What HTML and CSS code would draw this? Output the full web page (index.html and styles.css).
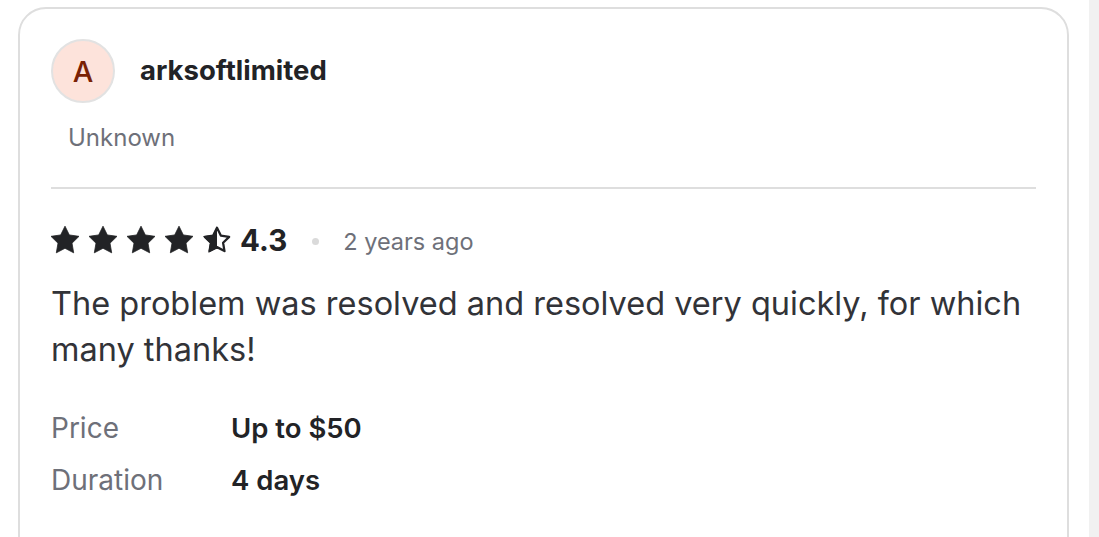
FILE: index.html
```html
<!DOCTYPE html>
<html>
<head>
<meta charset="utf-8">
<link rel="stylesheet" href="styles.css">
</head>
<body>
<div class="page">
  <main class="main">
    <article class="card">
      <header class="author">
        <div class="avatar">A</div>
        <div class="name">arksoftlimited</div>
      </header>
      <div class="country">Unknown</div>
      <hr class="divider">
      <div class="rating">
        <div class="stars">
          <svg class="star" viewBox="1.54 1.5 20.92 19.9"><path d="M12 1.5L15.23 8.05 22.46 9.1 17.23 14.2 18.47 21.4 12 18 5.53 21.4 6.77 14.2 1.54 9.1 8.77 8.05Z" fill="#222326" stroke="#222326" stroke-width="0.6" stroke-linejoin="round"/></svg>
          <svg class="star" viewBox="1.54 1.5 20.92 19.9"><path d="M12 1.5L15.23 8.05 22.46 9.1 17.23 14.2 18.47 21.4 12 18 5.53 21.4 6.77 14.2 1.54 9.1 8.77 8.05Z" fill="#222326" stroke="#222326" stroke-width="0.6" stroke-linejoin="round"/></svg>
          <svg class="star" viewBox="1.54 1.5 20.92 19.9"><path d="M12 1.5L15.23 8.05 22.46 9.1 17.23 14.2 18.47 21.4 12 18 5.53 21.4 6.77 14.2 1.54 9.1 8.77 8.05Z" fill="#222326" stroke="#222326" stroke-width="0.6" stroke-linejoin="round"/></svg>
          <svg class="star" viewBox="1.54 1.5 20.92 19.9"><path d="M12 1.5L15.23 8.05 22.46 9.1 17.23 14.2 18.47 21.4 12 18 5.53 21.4 6.77 14.2 1.54 9.1 8.77 8.05Z" fill="#222326" stroke="#222326" stroke-width="0.6" stroke-linejoin="round"/></svg>
          <svg class="star" viewBox="1.54 1.5 20.92 19.9"><path d="M12 2.7L14.85 8.5 21.1 9.45 16.55 13.9 17.6 20.1 12 17.15 6.4 20.1 7.45 13.9 2.9 9.45 9.15 8.5Z" fill="none" stroke="#222326" stroke-width="1.7" stroke-linejoin="round"/><path d="M12 1.5L8.77 8.05 1.54 9.1 6.77 14.2 5.53 21.4 12 18Z" fill="#222326"/></svg>
        </div>
        <span class="score">4.3</span>
        <span class="dot"></span>
        <span class="when">2 years ago</span>
      </div>
      <p class="review">The problem was resolved and resolved very quickly, for which many thanks!</p>
      <dl class="facts">
        <div class="fact"><dt>Price</dt><dd>Up to $50</dd></div>
        <div class="fact"><dt>Duration</dt><dd>4 days</dd></div>
      </dl>
    </article>
  </main>
  <div class="scrollbar"></div>
</div>
</body>
</html>
```

FILE: styles.css
```css
* { box-sizing: border-box; }
html, body { margin: 0; padding: 0; background: #fff; }
body {
  font-family: Inter, "Liberation Sans", sans-serif;
  color: #2b2c30;
  overflow: hidden;
  height: 537px;
}
.page {
  display: flex;
  height: 537px;
}
.main {
  flex: 1;
  padding: 7px 20px 0 18px;
  overflow: hidden;
}
.scrollbar {
  width: 10px;
  background: #f1f1f1;
}
.card {
  border: 2px solid #dedede;
  border-radius: 28px;
  padding: 30px 31px 60px 31px;
  height: 600px;
}
.author {
  display: flex;
  align-items: center;
  gap: 25px;
}
.avatar {
  width: 64px;
  height: 64px;
  border-radius: 50%;
  background: #fde3db;
  border: 2px solid #e2e2e2;
  color: #7a2104;
  display: flex;
  align-items: center;
  justify-content: center;
  font-size: 29px;
  font-weight: 500;
}
.name {
  font-size: 27.5px;
  font-weight: 700;
  color: #222326;
  margin-top: -2px;
}
.country {
  margin: 20px 0 0 17px;
  font-size: 24px;
  color: #6e7079;
}
.divider {
  border: 0;
  height: 2px;
  background: #dedede;
  margin: 35px 0 0 0;
}
.rating {
  display: flex;
  align-items: center;
  height: 35px;
  margin-top: 33px;
}
.stars {
  display: flex;
  gap: 10px;
}
.star {
  width: 28px;
  height: 27px;
  display: block;
  overflow: visible;
}
.score {
  margin-left: 9px;
  font-size: 29.5px;
  font-weight: 700;
  color: #222326;
}
.dot {
  width: 7px;
  height: 7px;
  border-radius: 50%;
  background: #dadada;
  margin: 4px 24px 0 25px;
}
.when {
  font-size: 23.5px;
  color: #6e7079;
  margin-top: 4px;
}
.review {
  margin: 24px 0 0 0;
  font-size: 32.5px;
  line-height: 46px;
  color: #323338;
}
.facts {
  margin: 37px 0 0 0;
  display: flex;
  flex-direction: column;
  gap: 16px;
}
.fact {
  display: flex;
  font-size: 28px;
  line-height: 36px;
}
.fact dt {
  width: 180px;
  color: #6e7079;
}
.fact dd {
  margin: 0;
  font-weight: 600;
  font-size: 27.5px;
  color: #222326;
}
```
